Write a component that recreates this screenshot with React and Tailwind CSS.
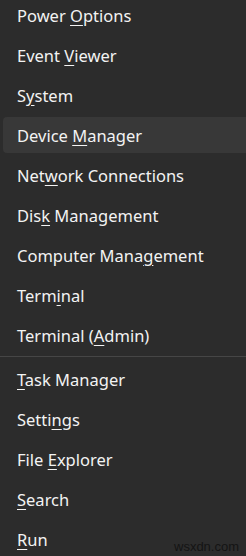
import React from 'react';

const items = [
  ['Power ', 'O', 'ptions'],
  ['Event ', 'V', 'iewer'],
  ['S', 'y', 'stem'],
  ['Device ', 'M', 'anager', true],
  ['Net', 'w', 'ork Connections'],
  ['Dis', 'k', ' Management'],
  ['Computer Mana', 'g', 'ement'],
  ['Term', 'i', 'nal'],
  ['Terminal (', 'A', 'dmin)'],
  'sep',
  ['', 'T', 'ask Manager'],
  ['Setti', 'n', 'gs'],
  ['File ', 'E', 'xplorer'],
  ['', 'S', 'earch'],
  ['', 'R', 'un'],
];

const MenuRow = ({ before, key_, after, active }) => (
  <div className="relative h-10 flex items-center">
    {active && (
      <div className="absolute left-[3px] right-[-6px] top-[1px] h-9 rounded-[4px] bg-[#383838]" />
    )}
    <span className="relative pl-[17px] text-[16.5px] text-[#f3f3f3] whitespace-nowrap">
      {before}
      <span className="underline decoration-1 underline-offset-[3px]">{key_}</span>
      {after}
    </span>
  </div>
);

export default function App() {
  return (
    <div
      className="relative w-[246px] h-[556px] overflow-hidden bg-[#2c2c2c]"
      style={{ fontFamily: '"Noto Sans", "Open Sans", sans-serif' }}
    >
      <div className="-mt-[4px]">
        {items.map((it, i) =>
          it === 'sep' ? (
            <div key={i} className="h-1 border-t border-[#464646]" />
          ) : (
            <MenuRow key={i} before={it[0]} key_={it[1]} after={it[2]} active={it[3]} />
          )
        )}
      </div>
      <span
        className="absolute left-[174px] top-[537px] text-[13px] text-[#141414]"
        style={{ fontFamily: '"Liberation Sans", sans-serif' }}
      >
        wsxdn.com
      </span>
    </div>
  );
}
